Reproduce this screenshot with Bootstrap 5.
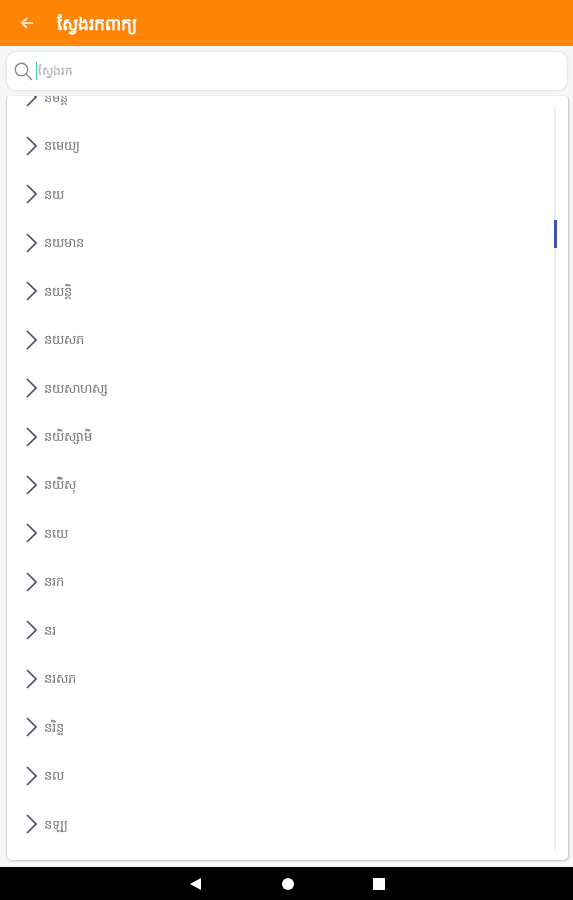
<!DOCTYPE html>
<html lang="km">
<head>
  <meta charset="utf-8">
  <title>ស្វែងរកពាក្យ</title>
  <link rel="stylesheet" href="https://cdn.jsdelivr.net/npm/bootstrap@5.3.0/dist/css/bootstrap.min.css">
  <style>
    html, body { height: 100%; }
    body { background: #f5f6f8; font-family: "Noto Sans", "DejaVu Sans", "Liberation Sans", sans-serif; overflow: hidden; }
    .page-wrap { height: 900px; }
    .app-top { height: 46px; background: #ff8506; padding-left: 20px; gap: 23px; }
    .app-title { color: #fff; font-size: 17px; font-weight: 700; line-height: 1; filter: blur(.5px); }
    .search-box { height: 38px; margin: 6px 6px 0 7px; background: #fff; border-radius: 9px; box-shadow: 0 0 2px 1px #dfe1e4; padding-left: 7px; }
    .search-text { color: #a9a9a9; font-size: 12px; border-left: 1.5px solid #4fc3b0; margin-left: 3px; padding-left: 1px; line-height: 18px; filter: blur(.5px); }
    .word-card { height: 764px; margin: 6px 5px 0 7px; border-radius: 3px 3px 5px 5px; border: 0; box-shadow: -1px 0 1px #d4d6d9, 1px 1px 2px #bdbfc2; overflow: hidden; }
    .word-list { margin-top: -23px; }
    .word-row { height: 48.47px; padding: 0 0 0 19px; border: 0; gap: 7px; background: transparent; }
    .word-text { color: #757575; font-size: 13px; line-height: 1; filter: blur(.5px); }
    .scroll-track { position: absolute; left: 547px; top: 10px; bottom: 10px; width: 2px; background: #eceef0; }
    .scroll-thumb { position: absolute; left: 0; top: 114px; width: 3px; height: 28px; background: #3f51b5; }
    .sys-nav { height: 33px; margin-top: 7px; padding-left: 2px; background: #000; }
  </style>
</head>
<body>
  <div class="page-wrap d-flex flex-column">
    <div class="app-top d-flex align-items-center">
      <svg width="14" height="14" viewBox="0 0 14 14" fill="none" stroke="#ffe3c4" stroke-width="2"><path d="M13 7H2M7 2 2 7l5 5"/></svg>
      <span class="app-title">ស្វែងរកពាក្យ</span>
    </div>

    <div class="search-box d-flex align-items-center">
      <svg width="19" height="19" viewBox="0 0 19 19" fill="none" stroke="#8a8a8a" stroke-width="1.4"><circle cx="7.500" cy="7.500" r="6.200"/><path d="m12 12 6 6"/></svg>
      <span class="search-text">ស្វែងរក</span>
    </div>

    <div class="card word-card position-relative">
      <div class="list-group list-group-flush word-list" id="wordList"></div>
      <div class="scroll-track"><div class="scroll-thumb"></div></div>
    </div>

    <div class="sys-nav d-flex align-items-center justify-content-center">
      <svg width="195" height="14" viewBox="0 0 195 14" fill="#fff">
        <path d="M0 7 11 1V13Z"/>
        <circle cx="98" cy="7" r="6"/>
        <rect x="183" y="1" width="12" height="12"/>
      </svg>
    </div>
  </div>

  <script src="https://cdn.jsdelivr.net/npm/bootstrap@5.3.0/dist/js/bootstrap.bundle.min.js"></script>
  <script>
    const words = ['នមន្តិ', 'នមេយ្យ', 'នយ', 'នយមាន', 'នយន្តិ', 'នយសភ', 'នយសាហស្ស', 'នយិស្សាមិ', 'នយិំសុ', 'នយេ', 'នរក', 'នរ', 'នរសភ', 'នរិន្ទ', 'នល', 'នឡ្យ'];
    const list = document.getElementById('wordList');
    words.forEach(word => {
      list.innerHTML += `
        <div class="list-group-item word-row d-flex align-items-center">
          <svg width="11" height="20" viewBox="0 0 11 20" fill="none" stroke="#4a4a6e" stroke-width="1.6"><path d="m1 1 9 9-9 9"/></svg>
          <span class="word-text">${word}</span>
        </div>`;
    });
  </script>
</body>
</html>
